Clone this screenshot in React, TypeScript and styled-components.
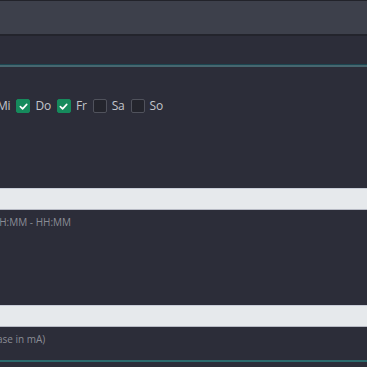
import React from "react";
import styled, { createGlobalStyle } from "styled-components";

const Global = createGlobalStyle`
  html, body { margin: 0; padding: 0; background: #2c2d39; overflow: hidden; }
  body { font-family: "Open Sans", "Noto Sans", sans-serif; }
`;

const Page = styled.div`
  width: 367px;
  height: 367px;
  overflow: hidden;
  background: #2c2d39;
`;

const TopBar = styled.div`
  height: 33px;
  background: #3d404b;
  border-top: 1px solid #22232a;
  border-bottom: 2px solid #23242c;
`;

const Spacer = styled.div<{ $h: number }>`
  height: ${(p) => p.$h}px;
`;

const Card = styled.section`
  border-top: 1px solid #1c4550;
`;

const CardInner = styled.div`
  border-top: 2px solid #46666f;
  padding-top: 31px;
  display: flex;
  flex-direction: column;
  margin-left: -101px;
  width: 570px;
`;

const DaysRow = styled.div`
  display: flex;
  align-items: center;
  gap: 6px;
  height: 16px;
`;

const Day = styled.label`
  display: flex;
  align-items: center;
  gap: 5px;
  font-size: 12px;
  letter-spacing: -0.2px;
  color: #c3c5cc;
  line-height: 16px;
`;

const Box = styled.span<{ $on: boolean }>`
  width: 14px;
  height: 14px;
  box-sizing: border-box;
  border-radius: 2px;
  background: ${(p) => (p.$on ? "#168a5c" : "#24252d")};
  border: 1px solid ${(p) => (p.$on ? "#168a5c" : "#50525c")};
  display: flex;
  align-items: center;
  justify-content: center;
`;

const Input = styled.div`
  height: 22px;
  box-sizing: border-box;
  background: #e6e9ec;
  border-top: 1px solid #c9cdd8;
  border-bottom: 1px solid #b7bac4;
`;

const Help = styled.div<{ $indent: number }>`
  font-size: 10px;
  color: #8a8c95;
  line-height: 14px;
  margin-top: 5px;
  padding-left: ${(p) => p.$indent}px;
`;

const BottomLine = styled.div`
  height: 2px;
  background: #2b6a6d;
`;

const Check = () => (
  <svg width="9" height="9" viewBox="0 0 10 10">
    <path d="M1.5 5.2 L4 7.6 L8.6 2.6" fill="none" stroke="#fff" strokeWidth="1.8" strokeLinecap="round" strokeLinejoin="round" />
  </svg>
);

const days: [string, boolean][] = [
  ["Mo", true],
  ["Di", true],
  ["Mi", true],
  ["Do", true],
  ["Fr", true],
  ["Sa", false],
  ["So", false],
];

export default function App() {
  return (
    <Page>
      <Global />
      <TopBar />
      <Spacer $h={28} />
      <Card>
        <CardInner>
          <DaysRow>
            {days.map(([d, on]) => (
              <Day key={d}>
                <Box $on={on}>{on && <Check />}</Box>
                {d}
              </Day>
            ))}
          </DaysRow>
          <Spacer $h={74} />
          <Input />
          <Help $indent={54}>Format: HH:MM - HH:MM</Help>
          <Spacer $h={76} />
          <Input />
          <Help $indent={33}>(Strom pro Phase in mA)</Help>
          <Spacer $h={14} />
        </CardInner>
        <BottomLine />
      </Card>
    </Page>
  );
}
